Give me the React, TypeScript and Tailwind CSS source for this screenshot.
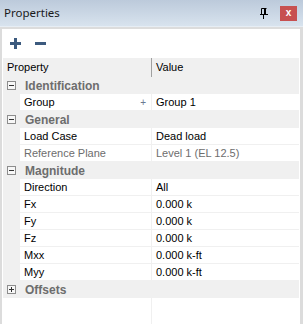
import React from 'react';

type Item = { name: string; value: string; disabled?: boolean; marker?: boolean };
type Category = { title: string; expanded: boolean; items: Item[] };

const categories: Category[] = [
  { title: 'Identification', expanded: true, items: [{ name: 'Group', value: 'Group 1', marker: true }] },
  {
    title: 'General',
    expanded: true,
    items: [
      { name: 'Load Case', value: 'Dead load' },
      { name: 'Reference Plane', value: 'Level 1 (EL 12.5)', disabled: true },
    ],
  },
  {
    title: 'Magnitude',
    expanded: true,
    items: [
      { name: 'Direction', value: 'All' },
      { name: 'Fx', value: '0.000 k' },
      { name: 'Fy', value: '0.000 k' },
      { name: 'Fz', value: '0.000 k' },
      { name: 'Mxx', value: '0.000 k-ft' },
      { name: 'Myy', value: '0.000 k-ft' },
    ],
  },
  { title: 'Offsets', expanded: false, items: [] },
];

const ExpandBox = ({ expanded }: { expanded: boolean }) => (
  <svg width="9" height="9" viewBox="0 0 9 9" className="block">
    <rect x="0.5" y="0.5" width="8" height="8" fill="#f7f7f7" stroke="#8d8d8d" />
    <line x1="2" y1="4.5" x2="7" y2="4.5" stroke="#333" />
    {!expanded && <line x1="4.5" y1="2" x2="4.5" y2="7" stroke="#333" />}
  </svg>
);

const PinIcon = () => (
  <svg width="8" height="11" viewBox="0 0 8 11" className="block">
    <path d="M1.5 0.5h5M1.5 0.5v6M4.5 0.5v6M5.5 0.5v6M0 6.5h8M3.5 7v4" stroke="#000" fill="none" />
  </svg>
);

export default function App() {
  return (
    <div className="w-[303px] h-[324px] flex flex-col bg-white overflow-hidden" style={{ fontFamily: '"Liberation Sans", Arial, sans-serif' }}>
      {/* title bar */}
      <div className="h-[27px] flex items-center pl-[4px] pr-[6px] bg-gradient-to-b from-[#bccadb] to-[#d8e3ee] border-b border-[#e6edf4]">
        <span className="flex-1 text-[11.5px] text-[#1a1a1a]" style={{ fontFamily: '"Noto Sans", "Open Sans", sans-serif' }}>
          Properties
        </span>
        <div className="mr-[12px]">
          <PinIcon />
        </div>
        <div className="w-[17px] h-[15px] bg-[#c75050] flex items-center justify-center text-white text-[10px] font-bold leading-none">
          x
        </div>
      </div>

      {/* panel */}
      <div className="flex-1 flex flex-col border-2 border-b-0 border-[#dcdcdc] border-r-[3px]">
        {/* toolbar */}
        <div className="h-[29px] flex items-center gap-[14px] pl-[8px] shrink-0">
          <svg width="11" height="11" viewBox="0 0 11 11" className="block">
            <path d="M4 0h3v4h4v3H7v4H4V7H0V4h4z" fill="#3c5a7e" />
          </svg>
          <svg width="11" height="11" viewBox="0 0 11 11" className="block">
            <rect x="0" y="4" width="11" height="3" fill="#3c5a7e" />
          </svg>
        </div>

        {/* grid */}
        <div className="flex-1 flex flex-col mx-px text-[11px] text-black">
          <div className="h-[19px] flex bg-[#f0f0f0] shrink-0">
            <div className="w-[149px] pl-[4px] flex items-center border-r border-[#a0a0a0]">Property</div>
            <div className="flex-1 pl-[4px] flex items-center">Value</div>
          </div>

          {categories.map((cat) => (
            <React.Fragment key={cat.title}>
              <div className="h-[17px] flex items-center bg-[#f0f0f0] shrink-0">
                <div className="w-[22px] pl-[4px] flex items-center">
                  <ExpandBox expanded={cat.expanded} />
                </div>
                <span className="font-bold text-[#6d6d6d] text-[12px]">{cat.title}</span>
              </div>
              {cat.items.map((item) => (
                <div key={item.name} className="h-[17px] flex border-b border-[#f0f0f0] shrink-0">
                  <div className="w-[17px] bg-[#f0f0f0]" />
                  <div className={`w-[132px] flex items-center pl-[4px] pr-[5px] border-r border-[#f0f0f0] ${item.disabled ? 'text-[#6d6d6d]' : ''}`}>
                    <span className="flex-1">{item.name}</span>
                    {item.marker && <span className="text-[#6a7a90] text-[10px]">+</span>}
                  </div>
                  <div className={`flex-1 flex items-center pl-[4px] ${item.disabled ? 'text-[#6d6d6d]' : ''}`}>{item.value}</div>
                </div>
              ))}
            </React.Fragment>
          ))}

          <div className="flex-1 flex">
            <div className="w-[149px] border-r border-[#f0f0f0]" />
            <div className="flex-1" />
          </div>
        </div>
      </div>
    </div>
  );
}
